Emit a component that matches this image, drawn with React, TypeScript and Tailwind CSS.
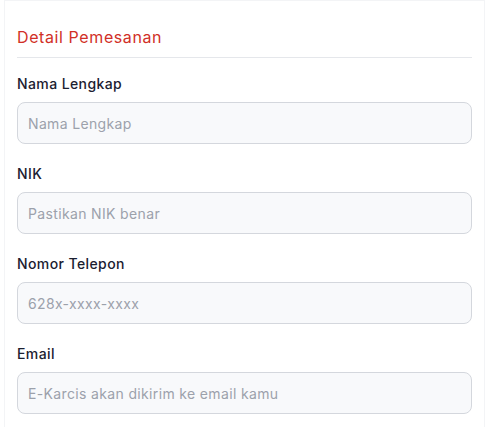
const fields = [
  { label: 'Nama Lengkap', placeholder: 'Nama Lengkap', type: 'text' },
  { label: 'NIK', placeholder: 'Pastikan NIK benar', type: 'text' },
  { label: 'Nomor Telepon', placeholder: '628x-xxxx-xxxx', type: 'tel' },
  { label: 'Email', placeholder: 'E-Karcis akan dikirim ke email kamu', type: 'email' },
];

export default function App() {
  return (
    <div className="min-h-screen bg-white px-1 font-['Inter',sans-serif]">
      <div className="border border-gray-100 px-3 pt-6 pb-6 min-h-[440px]">
        <h2 className="text-base leading-6 tracking-[0.6px] text-[#d12f27] pb-2 border-b border-gray-200">
          Detail Pemesanan
        </h2>
        <div className="mt-4 flex flex-col gap-5">
          {fields.map((f) => (
            <div key={f.label} className="flex flex-col">
              <label className="text-sm leading-5 font-medium tracking-[0.4px] text-[#1b2030] mb-2">
                {f.label}
              </label>
              <input
                type={f.type}
                placeholder={f.placeholder}
                className="h-[42px] w-full rounded-lg border border-[#d4d7dd] bg-[#f8f9fb] px-[10px] text-sm tracking-[0.35px] text-gray-800 placeholder:text-[#9ca1ab] outline-none"
              />
            </div>
          ))}
        </div>
      </div>
    </div>
  );
}
